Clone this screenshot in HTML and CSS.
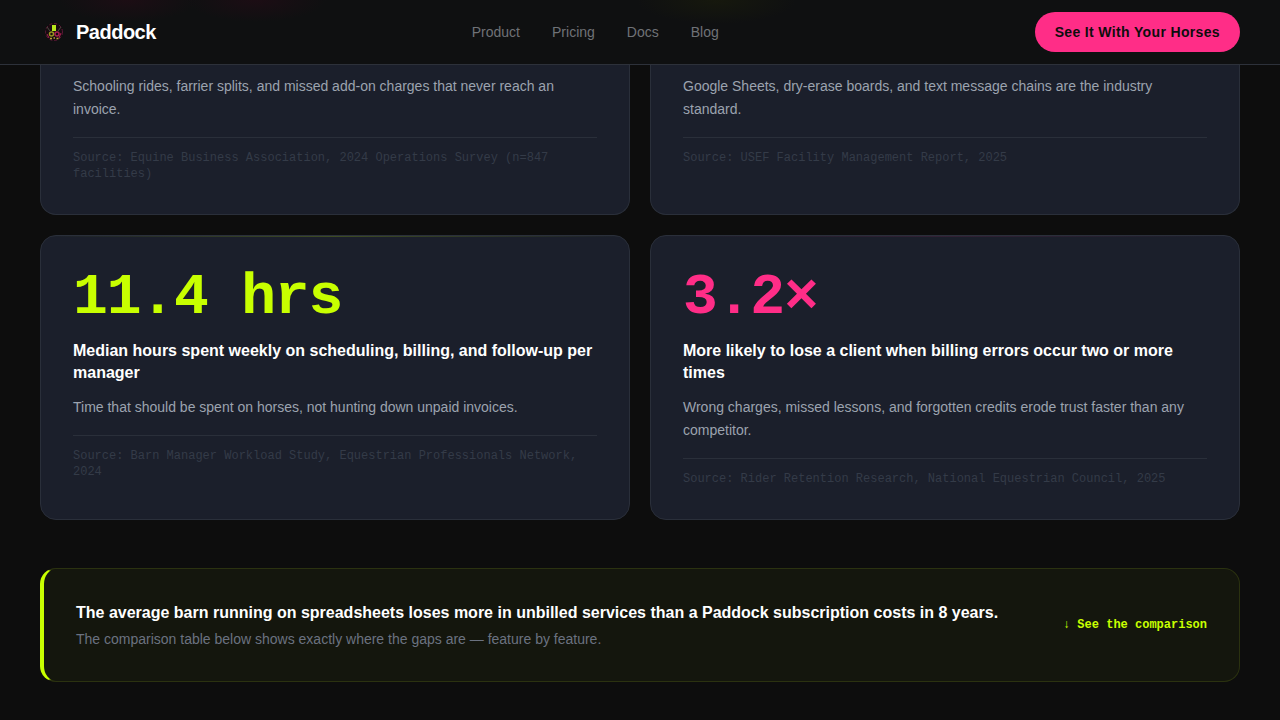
FILE: index.html
```
<!DOCTYPE html>
<html lang="en">
<head>
    <meta charset="UTF-8">
    <meta name="viewport" content="width=device-width, initial-scale=1.0">
    <title>Paddock</title>
    <link rel="stylesheet" href="styles.css">
</head>
<body>
    <header class="navbar">
        <a href="#" class="logo">
            <svg class="logo-icon" viewBox="0 0 28 28" aria-hidden="true">
                <circle cx="14" cy="14" r="9" fill="#170b10"/>
                <circle cx="14" cy="14" r="8.500" fill="none" stroke="#5c1a38" stroke-width="1" stroke-dasharray="3 2"/>
                <path d="M7 9l3 4M21 9l-3 4" stroke="#4a4d42" stroke-width="1"/>
                <path d="M12 7h4v6h-4z" fill="#b9e61c"/>
                <circle cx="11.500" cy="16" r="2" fill="none" stroke="#96931f" stroke-width="1.500"/>
                <circle cx="17" cy="16" r="2" fill="none" stroke="#a82050" stroke-width="1.500"/>
                <path d="M7 16l2 4M21 15l-2 5" stroke="#a82050" stroke-width="1"/>
                <path d="M10 20.500h2M13.500 20h1.500M16.500 20.500h2" stroke="#b5a236" stroke-width="1.500"/>
            </svg>
            <span>Paddock</span>
        </a>
        <nav class="nav-links">
            <a href="#">Product</a>
            <a href="#">Pricing</a>
            <a href="#">Docs</a>
            <a href="#">Blog</a>
        </nav>
        <button type="button" class="nav-cta">See It With Your Horses</button>
    </header>

    <main class="container">
        <section class="stats">
            <article class="card card-continued">
                <p class="card-text">Schooling rides, farrier splits, and missed add-on charges that never reach an invoice.</p>
                <p class="card-source">Source: Equine Business Association, 2024 Operations Survey (n=847 facilities)</p>
            </article>
            <article class="card card-continued">
                <p class="card-text">Google Sheets, dry-erase boards, and text message chains are the industry standard.</p>
                <p class="card-source">Source: USEF Facility Management Report, 2025</p>
            </article>
            <article class="card card-lime">
                <div class="card-number">11.4 hrs</div>
                <h3 class="card-title">Median hours spent weekly on scheduling, billing, and follow-up per manager</h3>
                <p class="card-text">Time that should be spent on horses, not hunting down unpaid invoices.</p>
                <p class="card-source">Source: Barn Manager Workload Study, Equestrian Professionals Network, 2024</p>
            </article>
            <article class="card card-pink">
                <div class="card-number">3.2×</div>
                <h3 class="card-title">More likely to lose a client when billing errors occur two or more times</h3>
                <p class="card-text">Wrong charges, missed lessons, and forgotten credits erode trust faster than any competitor.</p>
                <p class="card-source">Source: Rider Retention Research, National Equestrian Council, 2025</p>
            </article>
        </section>

        <section class="callout">
            <div>
                <p class="callout-title">The average barn running on spreadsheets loses more in unbilled services than a Paddock subscription costs in 8 years.</p>
                <p class="callout-text">The comparison table below shows exactly where the gaps are — feature by feature.</p>
            </div>
            <a href="#" class="callout-link">↓ See the comparison</a>
        </section>
    </main>
</body>
</html>
```
FILE: styles.css
```
* {
    margin: 0;
    padding: 0;
    box-sizing: border-box;
}

body {
    font-family: "Liberation Sans", Arial, sans-serif;
    background-color: #0d0d0d;
    color: #fff;
}

a {
    text-decoration: none;
}

/* Navbar */
.navbar {
    display: flex;
    justify-content: space-between;
    align-items: center;
    padding: 12px 40px;
    border-bottom: 1px solid #2d313a;
    background:
        radial-gradient(ellipse 70px 22px at 10% 0, #1c0d14, transparent),
        radial-gradient(ellipse 70px 22px at 20% 0, #1c0d14, transparent),
        radial-gradient(ellipse 80px 24px at 56% 0, #16180d, transparent),
        #0f1011;
}

.logo {
    display: flex;
    align-items: center;
    gap: 8px;
    color: #fff;
    font-size: 20px;
    font-weight: bold;
    letter-spacing: -0.025em;
}

.logo-icon {
    width: 28px;
    height: 28px;
}

.nav-links {
    display: flex;
    gap: 32px;
}

.nav-links a {
    color: #6f7277;
    font-size: 14px;
}

.nav-cta {
    height: 40px;
    padding: 0 20px;
    border: none;
    border-radius: 20px;
    background-color: #ff2d87;
    color: #0d0d0d;
    font-family: inherit;
    font-size: 14px;
    font-weight: bold;
    letter-spacing: 0.025em;
    cursor: pointer;
}

/* Stat cards */
.container {
    padding: 0 40px 38px;
}

.stats {
    display: grid;
    grid-template-columns: 1fr 1fr;
    gap: 20px;
}

.card {
    position: relative;
    overflow: hidden;
    padding: 32px;
    border: 1px solid #2a2f3a;
    border-radius: 16px;
    background-color: #1b1f2b;
}

/* first row runs on from under the navbar */
.card-continued {
    padding-top: 10px;
    border-top: none;
    border-radius: 0 0 16px 16px;
}

/* thin highlight along the top edge */
.card-lime::before,
.card-pink::before {
    content: "";
    position: absolute;
    top: 0;
    left: 0;
    right: 0;
    height: 1px;
}

.card-lime::before {
    background: linear-gradient(90deg, transparent, #c8ff00, transparent);
    opacity: 0.2;
}

.card-pink::before {
    background: linear-gradient(90deg, transparent, #ff2d87, transparent);
    opacity: 0.1;
}

.card-number {
    margin-bottom: 12px;
    font-family: "Liberation Mono", "Courier New", monospace;
    font-size: 58px;
    font-weight: bold;
    line-height: 60px;
    letter-spacing: -0.02em;
}

.card-lime .card-number {
    color: #c8ff00;
}

.card-pink .card-number {
    color: #ff2d87;
}

.card-title {
    margin-bottom: 12px;
    font-size: 16px;
    line-height: 22px;
}

.card-text {
    color: #9ca3af;
    font-size: 14px;
    line-height: 23px;
}

.card-source {
    margin-top: 16px;
    padding-top: 12px;
    border-top: 1px solid #2a2f3a;
    color: #343b48;
    font-family: "Liberation Mono", "Courier New", monospace;
    font-size: 12px;
    line-height: 16px;
}

/* Callout */
.callout {
    display: flex;
    justify-content: space-between;
    align-items: center;
    gap: 32px;
    margin-top: 48px;
    padding: 32px;
    border: 1px solid #2b3210;
    border-left: 4px solid #c8ff00;
    border-radius: 16px;
    background-color: #14160d;
}

.callout-title {
    margin-bottom: 4px;
    font-size: 16px;
    font-weight: bold;
    line-height: 24px;
}

.callout-text {
    color: #6b7280;
    font-size: 14px;
    line-height: 20px;
}

.callout-link {
    color: #c8ff00;
    font-family: "Liberation Mono", "Courier New", monospace;
    font-size: 12px;
    font-weight: bold;
    line-height: 16px;
    white-space: nowrap;
}
```
